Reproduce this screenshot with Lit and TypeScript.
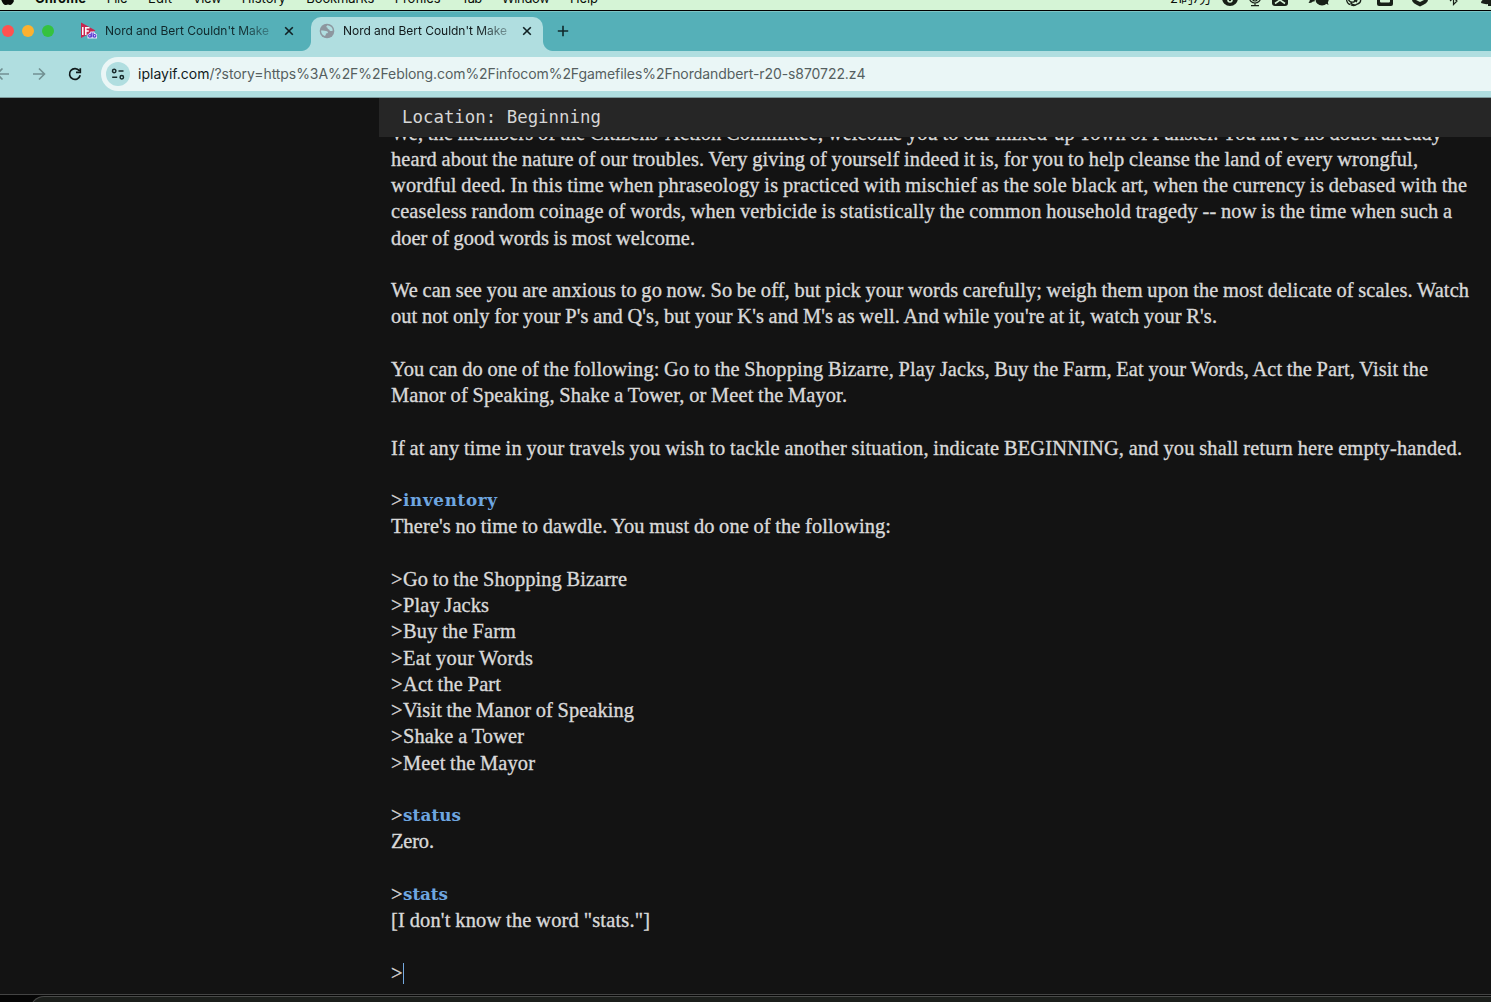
import { LitElement, html, css, svg, nothing } from "lit";
import { customElement } from "lit/decorators.js";

interface Line {
  text?: string;
  width?: number;
  prompt?: boolean;
  command?: boolean;
  caret?: boolean;
}

const LINES: Line[] = [
  { text: "We, the members of the Citizens' Action Committee, welcome you to our mixed-up Town of Punster. You have no doubt already", width: 1051 },
  { text: "heard about the nature of our troubles. Very giving of yourself indeed it is, for you to help cleanse the land of every wrongful,", width: 1027 },
  { text: "wordful deed. In this time when phraseology is practiced with mischief as the sole black art, when the currency is debased with the", width: 1076 },
  { text: "ceaseless random coinage of words, when verbicide is statistically the common household tragedy -- now is the time when such a", width: 1061 },
  { text: "doer of good words is most welcome.", width: 304 },
  {},
  { text: "We can see you are anxious to go now. So be off, but pick your words carefully; weigh them upon the most delicate of scales. Watch", width: 1078 },
  { text: "out not only for your P's and Q's, but your K's and M's as well. And while you're at it, watch your R's.", width: 826 },
  {},
  { text: "You can do one of the following: Go to the Shopping Bizarre, Play Jacks, Buy the Farm, Eat your Words, Act the Part, Visit the", width: 1037 },
  { text: "Manor of Speaking, Shake a Tower, or Meet the Mayor.", width: 456 },
  {},
  { text: "If at any time in your travels you wish to tackle another situation, indicate BEGINNING, and you shall return here empty-handed.", width: 1071 },
  {},
  { prompt: true, command: true, text: "inventory", width: 94 },
  { text: "There's no time to dawdle. You must do one of the following:", width: 500 },
  {},
  { prompt: true, text: "Go to the Shopping Bizarre", width: 224 },
  { prompt: true, text: "Play Jacks", width: 86 },
  { prompt: true, text: "Buy the Farm", width: 113 },
  { prompt: true, text: "Eat your Words", width: 130 },
  { prompt: true, text: "Act the Part", width: 98 },
  { prompt: true, text: "Visit the Manor of Speaking", width: 231 },
  { prompt: true, text: "Shake a Tower", width: 121 },
  { prompt: true, text: "Meet the Mayor", width: 132 },
  {},
  { prompt: true, command: true, text: "status", width: 58 },
  { text: "Zero.", width: 43 },
  {},
  { prompt: true, command: true, text: "stats", width: 45 },
  { text: "[I don't know the word \"stats.\"]", width: 259 },
  {},
  { prompt: true, caret: true },
];

const MENUS: [string, number][] = [
  ["Chrome", 51], ["File", 21], ["Edit", 24], ["View", 29], ["History", 44],
  ["Bookmarks", 68], ["Profiles", 46], ["Tab", 21], ["Window", 48], ["Help", 28],
];

/** Letter-spaces its text so that the run takes up a given width. */
@customElement("fit-text")
export class FitText extends LitElement {
  static properties = { text: {}, width: { type: Number } };
  declare text: string;
  declare width: number;
  static styles = css`
    :host { display: inline-block; white-space: pre; }
    .run { display: inline-block; }
  `;
  render() {
    return html`<span class="run">${this.text}</span>`;
  }
  updated() {
    const run = this.renderRoot.querySelector(".run") as HTMLElement;
    run.style.letterSpacing = "0px";
    const natural = run.getBoundingClientRect().width;
    run.style.letterSpacing = `${(this.width - natural) / Math.max(1, this.text.length - 1)}px`;
  }
}

const fit = (text: string, width: number) => html`<fit-text .text=${text} .width=${width}></fit-text>`;

@customElement("app-root")
export class AppRoot extends LitElement {
  static styles = css`
    :host { display: block; width: 1491px; height: 1002px; overflow: hidden; background: #131313; }
    * { box-sizing: border-box; }
    svg { display: block; flex: none; }
    .screen { display: flex; flex-direction: column; height: 1002px; font-family: Inter, "Liberation Sans", sans-serif; }
    .menubar { height: 12px; flex: none; background: #d5f4d6; border-bottom: 1px solid #7cc5c5; box-shadow: inset 0 -1px #000; overflow: hidden; display: flex; justify-content: space-between; color: #0a0f0a; }
    .menus { display: flex; gap: 20.5px; font-size: 13px; line-height: 16px; margin-top: -10px; height: 16px; }
    .menus .app { font-weight: 700; }
    .apple { margin-right: -.5px; }
    .status { display: flex; flex: none; width: 321px; }
    .clock { font: 13px/16px Inter, "Noto Sans CJK SC", sans-serif; margin-top: -10px; width: 51px; height: 16px; }
    .tabs { height: 39px; flex: none; background: #55b0b8; display: flex; align-items: flex-end; color: #10282b; font-size: 12px; }
    .lights { display: flex; gap: 8px; padding: 0 0 1px 2px; height: 39px; align-items: center; width: 70px; }
    .light { width: 12px; height: 12px; border-radius: 50%; }
    .red { background: #ff5250; } .amber { background: #fdb12f; } .green { background: #35c23f; }
    .tab { height: 34px; display: flex; align-items: center; padding-bottom: 7px; }
    .first { width: 241px; padding-left: 10px; height: 34px; }
    .second { width: 232px; padding-left: 8px; background: #b0dee0; border-radius: 10px 10px 0 0; color: #10181a; }
    .title { width: 166px; margin-left: 8px; height: 18px; line-height: 18px; white-space: nowrap; overflow: hidden; -webkit-mask-image: linear-gradient(90deg, #000 136px, rgba(0,0,0,.35) 164px); mask-image: linear-gradient(90deg, #000 136px, rgba(0,0,0,.35) 164px); }
    .close { margin-left: 13px; }
    .flare { width: 10px; height: 10px; }
    .flare.l { margin-left: -10px; background: radial-gradient(circle at 0 0, transparent 9.5px, #b0dee0 10.5px); }
    .flare.r { background: radial-gradient(circle at 100% 0, transparent 9.5px, #b0dee0 10.5px); }
    .plus { margin: 0 0 14px 4px; }
    .toolbar { height: 47px; flex: none; background: #b0dee0; border-bottom: 1px solid #7d9a9c; display: flex; align-items: center; }
    .nav { display: flex; width: 101px; align-items: center; }
    .omnibox { flex: 1; height: 34px; background: #eaf6f6; border-radius: 17px 0 0 17px; display: flex; align-items: center; padding-left: 5px; font-size: 14px; color: #555f60; }
    .site { width: 24px; height: 24px; border-radius: 50%; background: #b0dee0; display: flex; align-items: center; justify-content: center; margin-right: 8px; }
    .url { padding-bottom: 2px; }
    .host { color: #111b1c; }
    .page { flex: 1; min-height: 0; display: flex; justify-content: flex-end; background: #131313; }
    .game { width: 1112px; display: flex; flex-direction: column; }
    .location { height: 39px; flex: none; background: #262626; color: #d6d6d6; font: 17.4px/39px "DejaVu Sans Mono", monospace; padding-left: 23px; white-space: pre; }
    .story { flex: 1; min-height: 0; overflow: hidden; padding-left: 12px; color: #d9d9d9; font: 20.4px/26.25px "Liberation Serif", serif; word-spacing: -.6px; -webkit-text-stroke: .35px currentColor; }
    .lines { margin-top: -17.4px; }
    .line { height: 26.25px; display: flex; white-space: pre; }
    .prompt { width: 12px; flex: none; }
    .command { color: #6ea6e0; font: bold 16.8px/26.25px "DejaVu Serif", serif; -webkit-text-stroke: 0; }
    .caret { width: 1px; height: 21px; background: #75a9df; margin-top: 3px; }
    .edge { flex: none; height: 8px; background: #060606; border-top: 1px solid #444; padding: 1px 0 0 30px; overflow: hidden; }
    .window { height: 20px; border: 1px solid #484948; border-right: 0; border-radius: 14px 0 0 0; background: #1b1e1b; }
  `;

  private closeIcon() {
    return html`<svg class="close" width="10" height="10" viewBox="0 0 10 10" fill="none" stroke="#102023" stroke-width="1.6"><path d="M1.2 1.2l7.6 7.6M8.8 1.2L1.2 8.8"/></svg>`;
  }

  private statusIcons() {
    return svg`
      <circle cx="9" cy="-2" r="8" fill="#182018"/><circle cx="9" cy="0" r="2.8" fill="#d5f4d6"/><circle cx="9" cy="0" r="1.2" fill="#182018"/>
      <g fill="none" stroke="#182018" stroke-width="1.2"><path d="M28.5-2a5.5 5 0 0 0 11 0M34 3v2.5M30 5.7h8"/><rect x="31.5" y="-8" width="5" height="9" rx="2.5"/></g>
      <rect x="51" y="-10" width="16" height="16" rx="3" fill="#182018"/><path d="M54 3.5l10-7M64 3.5l-10-7" stroke="#d5f4d6" stroke-width="1.6"/>
      <path d="M89-1q0 2-1.5 4 3 0 4.500-1.500 2.500.5 4-2v-6h-7z" fill="#182018"/><ellipse cx="101" cy="-1" rx="6.800" ry="6.500" fill="#182018"/><path d="M104 3l3.500 2-1-4z" fill="#182018"/><path d="M94.200-4v7" stroke="#d5f4d6"/>
      <g fill="none" stroke="#182018" stroke-width="1.3"><path d="M125.500-2q0 6 4 6.500M127-2q1 5 6 4l6-4M129.500 2.500q3 4 7 1.500 4-1 3-6M131-2l5 4M133-3l4 2.500M130 5q4 1.500 6-1"/></g>
      <rect x="156" y="-10" width="16" height="16" rx="2" fill="#182018"/><path d="M159-4h10v5.500q0 1-1 1h-8q-1 0-1-1z" fill="#d5f4d6"/>
      <path d="M191-8h16v8q0 3-8 6.500-8-3.500-8-6.500z" fill="#182018"/><path d="M195-3h8v3l-4 2-4-2z" fill="#d5f4d6"/>
      <path d="M229 1l7-6M229-5l7 6-3.500 3.500V-8" fill="none" stroke="#182018" stroke-width="1.2"/>
      <path d="M260 3q0-3 4-4v-3h8v10h-5v-2q-3 .5-7-1z" fill="#182018"/>`;
  }

  render() {
    return html`
      <div class="screen">
        <div class="menubar">
          <div class="menus">
            <svg class="apple" width="15" height="16" viewBox="0 0 15 16"><path d="M2 5Q8 1 14 5q-2 2 0 6-2 4-4 4-2-.8-4 0Q3 15.500 1 9z" fill="#070b07"/></svg>
            ${MENUS.map(([t, w], i) => html`<span class=${i === 0 ? "app" : "menu"}>${fit(t, w)}</span>`)}
          </div>
          <div class="status">
            <div class="clock">${fit("21时7分", 42)}</div>
            <svg width="270" height="10" viewBox="0 0 270 10">${this.statusIcons()}</svg>
          </div>
        </div>
        <div class="tabs">
          <div class="lights"><i class="light red"></i><i class="light amber"></i><i class="light green"></i></div>
          <div class="tab first">
            <svg width="17" height="17" viewBox="0 0 17 17">
              <path d="M1 .5l14.500 8L1 16z" fill="#c9264f"/>
              <g stroke="#fff" stroke-width="1.500" fill="none"><path d="M2.800 5v8M5.800 13V5.800h3.700M5.800 9h3"/></g>
              <path d="M7.500 12.500l2-1.500 1-1.500h3.500l1 1.500 2 1.500v4h-9.500z" fill="#e9e4ff"/>
              <g stroke="#5537cf" fill="none" stroke-width="1.100"><circle cx="9.900" cy="13.800" r="1.300"/><path d="M11.300 10.500v4.800M13.100 10.500v4.800"/><circle cx="14.600" cy="13.800" r="1.300"/></g>
            </svg>
            <div class="title">${fit("Nord and Bert Couldn't Make", 164)}</div>
            ${this.closeIcon()}
          </div>
          <div class="flare l"></div>
          <div class="tab second">
            <svg width="16" height="16" viewBox="0 0 16 16"><circle cx="8" cy="8" r="7.300" fill="#8d979f"/><path d="M2 7.500q3-.3 5 .500 2 0 2 1.800-.5.700-2 .700 0 2-1.500 2.500Q2.200 11.500 2 7.500zM8.500 2.200q-1.700.8-1 2 1.500.3 1.300 1.800 1.700 0 2 1.700 1.500.7 3-.2Q13.500 3 8.500 2.200z" fill="#b0dee0"/></svg>
            <div class="title">${fit("Nord and Bert Couldn't Make", 164)}</div>
            ${this.closeIcon()}
          </div>
          <div class="flare r"></div>
          <svg class="plus" width="12" height="12" viewBox="0 0 12 12" stroke="#10282b" stroke-width="1.600"><path d="M6 .8v10.400M.8 6h10.400"/></svg>
        </div>
        <div class="toolbar">
          <div class="nav">
            <svg width="101" height="20" viewBox="0 0 101 20" fill="none" stroke-width="1.600">
              <path d="M9 10H-3M2.500 4.500L-3 10l5.500 5.500" stroke="#719092"/>
              <path d="M33 10h11.500M39 4.500l5.500 5.500-5.500 5.500" stroke="#719092"/>
              <path d="M79.300 6.800A5.400 5.400 0 1 0 80.200 11.300M80.300 4.300v4h-4.300" stroke="#101a1b" stroke-width="1.700"/>
            </svg>
          </div>
          <div class="omnibox">
            <div class="site"><svg width="14" height="14" viewBox="0 0 14 14" fill="none" stroke="#17292b" stroke-width="1.500"><circle cx="3.200" cy="4" r="1.700"/><path d="M7.500 4h5M1.200 10.300h5"/><circle cx="10.800" cy="10.300" r="1.700"/></svg></div>
            <span class="url host">${fit("iplayif.com", 71.500)}</span><span class="url">${fit("/?story=https%3A%2F%2Feblong.com%2Finfocom%2Fgamefiles%2Fnordandbert-r20-s870722.z4", 656)}</span>
          </div>
        </div>
        <div class="page">
          <main class="game">
            <div class="location">Location: Beginning</div>
            <div class="story"><div class="lines">
              ${LINES.map((l) => html`<div class="line">
                ${l.prompt ? html`<span class="prompt">></span>` : nothing}${l.text ? html`<span class=${l.command ? "command" : "text"}>${fit(l.text, l.width!)}</span>` : nothing}${l.caret ? html`<i class="caret"></i>` : nothing}</div>`)}
            </div></div>
          </main>
        </div>
        <div class="edge"><div class="window"></div></div>
      </div>`;
  }
}
